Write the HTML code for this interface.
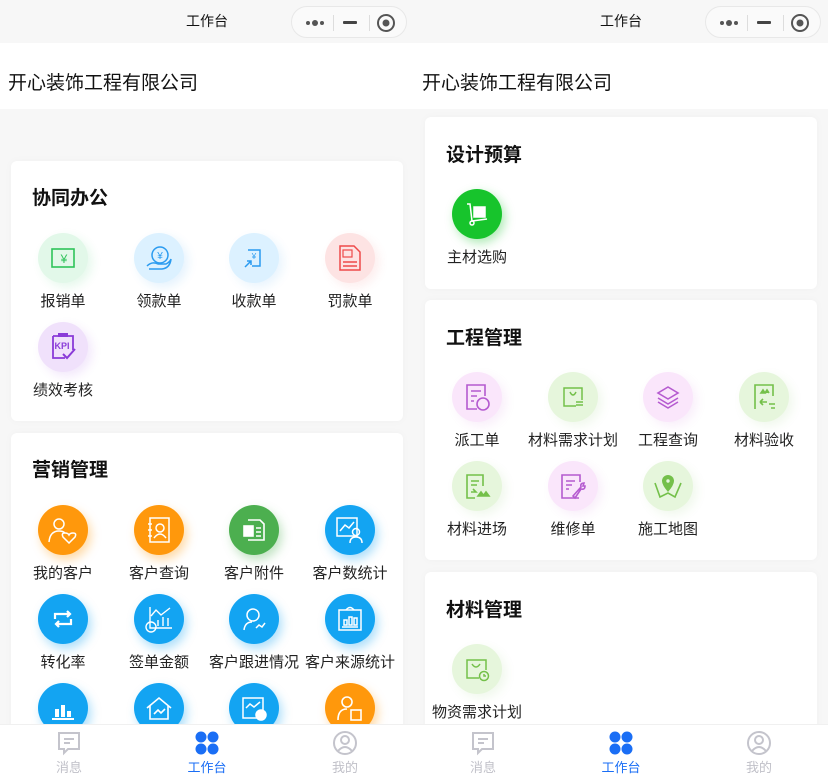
<!DOCTYPE html>
<html><head><meta charset="utf-8">
<style>
*{margin:0;padding:0;box-sizing:border-box}
body{width:828px;height:780px;overflow:hidden;background:#f7f7f7;font-family:"Liberation Sans","Noto Sans CJK SC",sans-serif;color:#222;position:relative}
.pane{position:absolute;top:0;width:414px;height:780px;overflow:hidden;background:#f7f7f7}
.hdr{position:absolute;left:0;top:0;width:414px;height:43px;background:#f7f7f7;text-align:center;line-height:43px;font-size:14px;color:#111}
.cap{position:absolute;left:291px;top:6px;width:116px;height:32px;border:1px solid #e8e8e8;border-radius:16px;background:#fafafa}
.cap .s{position:absolute;top:8px;width:1px;height:16px;background:#ddd}
.co{position:absolute;left:0;top:43px;width:414px;height:66px;background:#fff;font-size:19px;line-height:82px;padding-left:8px;color:#111}
.card{position:absolute;left:11px;width:392px;background:#fff;border-radius:6px;box-shadow:0 0 8px rgba(0,0,0,.03)}
.t{position:absolute;font-size:19px;font-weight:bold;color:#111}
.it{position:absolute;width:96px;height:80px;text-align:center}
.c{position:absolute;left:23px;top:0;width:50px;height:50px;border-radius:50%;display:flex;align-items:center;justify-content:center}
.l{position:absolute;left:-10px;width:116px;top:59px;line-height:20px;font-size:15px;color:#222;white-space:nowrap;text-align:center}
.tab{position:absolute;left:0;top:724px;width:414px;height:56px;background:#fff;border-top:1px solid #f0f0f0}
.ti{position:absolute;top:0;width:80px;text-align:center;font-size:13px;color:#c0c0c8}
.ti svg{display:block;margin:5px auto 0}
.ti span{display:block;margin-top:1px}
</style></head><body>

<!-- LEFT -->
<div class="pane" style="left:0">
 <div class="hdr">工作台</div>
 <div class="cap">
  <svg style="position:absolute;left:11px;top:8px" width="24" height="16"><circle cx="5" cy="8" r="2" fill="#555"/><circle cx="12" cy="8" r="3" fill="#555"/><circle cx="19" cy="8" r="2" fill="#555"/></svg>
  <div class="s" style="left:41px"></div>
  <div style="position:absolute;left:51px;top:14px;width:14px;height:3px;background:#444;border-radius:1px"></div>
  <div class="s" style="left:77px"></div>
  <svg style="position:absolute;left:84px;top:6px" width="20" height="20"><circle cx="10" cy="10" r="8" fill="none" stroke="#555" stroke-width="2"/><circle cx="10" cy="10" r="3.5" fill="#555"/></svg>
 </div>
 <div class="co">开心装饰工程有限公司</div>

 <div class="card" style="top:161px;height:260px">
  <div class="t" style="left:21px;top:22px">协同办公</div>
 </div>
 <div class="it" style="left:15px;top:233px"><div class="c" style="background:#e2f8e9;box-shadow:4px 4px 10px rgba(40,200,90,.12)"><svg width="26" height="22"><rect x="2" y="2" width="22" height="18" fill="none" stroke="#2fc35a" stroke-width="1.6"/><text x="14" y="16" font-size="12" fill="#2fc35a" text-anchor="middle" font-family="Liberation Sans">¥</text></svg></div><div class="l">报销单</div></div>
 <div class="it" style="left:111px;top:233px"><div class="c" style="background:#dcf1ff;box-shadow:4px 4px 10px rgba(30,150,240,.12)"><svg width="30" height="28"><circle cx="16" cy="11" r="8" fill="none" stroke="#2a9bf0" stroke-width="1.5"/><text x="16" y="15" font-size="10" fill="#2a9bf0" text-anchor="middle">¥</text><path d="M3 22 Q8 17 14 20 L22 20 Q26 18 27 15 Q26 24 18 25 L5 25" fill="none" stroke="#2a9bf0" stroke-width="1.5"/></svg></div><div class="l">领款单</div></div>
 <div class="it" style="left:206px;top:233px"><div class="c" style="background:#dcf1ff;box-shadow:4px 4px 10px rgba(30,150,240,.1)"><svg width="24" height="24"><path d="M6 4 H18 V20 H10" fill="none" stroke="#2a9bf0" stroke-width="1.5"/><text x="12" y="13" font-size="8" fill="#2a9bf0" text-anchor="middle">¥</text><path d="M3 21 L9 15 M5 15 H9 V19" fill="none" stroke="#2a9bf0" stroke-width="1.5"/></svg></div><div class="l">收款单</div></div>
 <div class="it" style="left:302px;top:233px"><div class="c" style="background:#fde3e3;box-shadow:4px 4px 10px rgba(240,80,80,.1)"><svg width="26" height="28"><path d="M3 2 H17 L23 8 V26 H3 Z" fill="none" stroke="#ef4a4a" stroke-width="1.5"/><rect x="6" y="6" width="9" height="7" fill="none" stroke="#ef4a4a" stroke-width="1.2"/><path d="M6 18 H20 M6 22 H20" stroke="#ef4a4a" stroke-width="1.5"/></svg></div><div class="l">罚款单</div></div>
 <div class="it" style="left:15px;top:322px"><div class="c" style="background:#f0e1fb;box-shadow:4px 4px 10px rgba(150,60,220,.12)"><svg width="28" height="30"><path d="M4 4 H24 V18 M4 4 V26 H16" fill="none" stroke="#8a3bd8" stroke-width="1.8"/><rect x="9" y="1" width="10" height="4" fill="#8a3bd8"/><text x="13" y="17" font-size="9" font-weight="bold" fill="#8a3bd8" text-anchor="middle">KPI</text><path d="M14 22 L18 26 L26 17" fill="none" stroke="#8a3bd8" stroke-width="2"/></svg></div><div class="l">绩效考核</div></div>

 <div class="card" style="top:433px;height:360px">
  <div class="t" style="left:21px;top:22px">营销管理</div>
 </div>
 <div class="it" style="left:15px;top:505px"><div class="c" style="background:#ff980c;box-shadow:3px 5px 10px rgba(255,150,0,.35)"><svg width="32" height="28" fill="none" stroke="#fff" stroke-width="1.5"><circle cx="12" cy="8" r="5"/><path d="M2 26 Q3 15 12 15 Q16 15 18 17"/><path d="M22 27 L16 21 Q14 17 18 17 Q21 17 22 19 Q23 17 26 17 Q30 17 28 21 Z"/></svg></div><div class="l">我的客户</div></div>
 <div class="it" style="left:111px;top:505px"><div class="c" style="background:#ff980c;box-shadow:3px 5px 10px rgba(255,150,0,.35)"><svg width="26" height="28" fill="none" stroke="#fff" stroke-width="1.5"><rect x="4" y="2" width="19" height="24"/><path d="M2 8 H6 M2 14 H6 M2 20 H6"/><circle cx="14" cy="12" r="4"/><path d="M8 22 Q14 14 20 22"/></svg></div><div class="l">客户查询</div></div>
 <div class="it" style="left:206px;top:505px"><div class="c" style="background:#4caf4f;box-shadow:3px 5px 10px rgba(76,175,79,.35)"><svg width="26" height="26" fill="none" stroke="#fff" stroke-width="1.6"><path d="M7 3 H19 L23 7 V23 H7"/><rect x="3" y="9" width="9" height="10" fill="#fff"/><path d="M15 11 H20 M15 15 H20 M15 19 H20"/></svg></div><div class="l">客户附件</div></div>
 <div class="it" style="left:302px;top:505px"><div class="c" style="background:#13a4f2;box-shadow:3px 5px 10px rgba(19,164,242,.35)"><svg width="30" height="28" fill="none" stroke="#fff" stroke-width="1.5"><rect x="2" y="2" width="20" height="18"/><path d="M5 15 L10 9 L14 12 L19 6"/><circle cx="21" cy="16" r="3.5"/><path d="M15 27 Q15 21 21 21 Q27 21 27 27"/></svg></div><div class="l">客户数统计</div></div>
 <div class="it" style="left:15px;top:594px"><div class="c" style="background:#13a4f2;box-shadow:3px 5px 10px rgba(19,164,242,.35)"><svg width="24" height="20" fill="none" stroke="#fff" stroke-width="2.2"><path d="M4 10 V5 H19 M16 2 L19 5 L16 8"/><path d="M20 10 V15 H5 M8 12 L5 15 L8 18"/></svg></div><div class="l">转化率</div></div>
 <div class="it" style="left:111px;top:594px"><div class="c" style="background:#13a4f2;box-shadow:3px 5px 10px rgba(19,164,242,.35)"><svg width="30" height="30" fill="none" stroke="#fff" stroke-width="1.4"><path d="M6 3 V24 H28"/><path d="M7 12 L12 6 L17 11 L26 4"/><path d="M14 22 V16 M19 22 V13 M24 22 V14"/><circle cx="7" cy="23" r="5"/></svg></div><div class="l">签单金额</div></div>
 <div class="it" style="left:206px;top:594px"><div class="c" style="background:#13a4f2;box-shadow:3px 5px 10px rgba(19,164,242,.35)"><svg width="26" height="26" fill="none" stroke="#fff" stroke-width="1.5"><circle cx="12" cy="9" r="6"/><path d="M3 24 Q4 16 11 16"/><path d="M15 22 L18 19 L21 21 L24 17"/></svg></div><div class="l">客户跟进情况</div></div>
 <div class="it" style="left:302px;top:594px"><div class="c" style="background:#13a4f2;box-shadow:3px 5px 10px rgba(19,164,242,.35)"><svg width="28" height="28" fill="none" stroke="#fff" stroke-width="1.5"><rect x="3" y="5" width="22" height="20"/><path d="M10 5 Q14 0 18 5"/><rect x="8" y="15" width="3" height="5"/><rect x="13" y="12" width="3" height="8"/><rect x="18" y="13" width="3" height="7"/><path d="M6 22 H22"/></svg></div><div class="l">客户来源统计</div></div>
 <div class="it" style="left:15px;top:683px"><div class="c" style="background:#13a4f2;box-shadow:3px 5px 10px rgba(19,164,242,.35)"><svg width="26" height="26" fill="#fff"><rect x="5" y="14" width="4" height="8"/><rect x="11" y="10" width="4" height="12"/><rect x="17" y="16" width="4" height="6"/><rect x="2" y="23" width="22" height="2"/></svg></div></div>
 <div class="it" style="left:111px;top:683px"><div class="c" style="background:#13a4f2;box-shadow:3px 5px 10px rgba(19,164,242,.35)"><svg width="28" height="26" fill="none" stroke="#fff" stroke-width="1.6"><path d="M2 13 L14 3 L26 13 M5 11 V24 H23 V11"/><path d="M9 19 L13 15 L16 18 L20 14"/></svg></div></div>
 <div class="it" style="left:206px;top:683px"><div class="c" style="background:#13a4f2;box-shadow:3px 5px 10px rgba(19,164,242,.35)"><svg width="28" height="28" fill="none" stroke="#fff" stroke-width="1.5"><rect x="3" y="4" width="20" height="20"/><path d="M6 14 L10 10 L14 13 L20 8"/><circle cx="21" cy="21" r="5" fill="#fff"/></svg></div></div>
 <div class="it" style="left:302px;top:683px"><div class="c" style="background:#ff980c;box-shadow:3px 5px 10px rgba(255,150,0,.35)"><svg width="28" height="28" fill="none" stroke="#fff" stroke-width="1.6"><circle cx="11" cy="8" r="5"/><path d="M2 26 Q2 15 11 15"/><rect x="15" y="16" width="10" height="10"/></svg></div></div>

 <div class="tab">
  <div class="ti" style="left:29px"><svg width="26" height="26" fill="none" stroke="#c4c4cc" stroke-width="2"><path d="M3 3 H23 V19 H12 L8 23 V19 H3 Z"/><path d="M8 9 H18 M8 13 H14"/></svg><span>消息</span></div>
  <div class="ti" style="left:167px;color:#1a6ef5"><svg width="26" height="26" fill="#1a6ef5"><circle cx="7" cy="7" r="5.5"/><circle cx="19" cy="7" r="5.5"/><circle cx="7" cy="19" r="5.5"/><circle cx="19" cy="19" r="5.5"/></svg><span>工作台</span></div>
  <div class="ti" style="left:305px"><svg width="26" height="26" fill="none" stroke="#c4c4cc" stroke-width="2"><circle cx="13" cy="13" r="11"/><circle cx="13" cy="10" r="4"/><path d="M6 21 Q13 13 20 21"/></svg><span>我的</span></div>
 </div>
</div>

<!-- RIGHT -->
<div class="pane" style="left:414px">
 <div class="hdr">工作台</div>
 <div class="cap">
  <svg style="position:absolute;left:11px;top:8px" width="24" height="16"><circle cx="5" cy="8" r="2" fill="#555"/><circle cx="12" cy="8" r="3" fill="#555"/><circle cx="19" cy="8" r="2" fill="#555"/></svg>
  <div class="s" style="left:41px"></div>
  <div style="position:absolute;left:51px;top:14px;width:14px;height:3px;background:#444;border-radius:1px"></div>
  <div class="s" style="left:77px"></div>
  <svg style="position:absolute;left:84px;top:6px" width="20" height="20"><circle cx="10" cy="10" r="8" fill="none" stroke="#555" stroke-width="2"/><circle cx="10" cy="10" r="3.5" fill="#555"/></svg>
 </div>
 <div class="co">开心装饰工程有限公司</div>

 <div class="card" style="top:117px;height:172px"><div class="t" style="left:21px;top:23px">设计预算</div></div>
 <div class="it" style="left:15px;top:189px"><div class="c" style="background:#17c42c;box-shadow:3px 4px 10px rgba(23,196,44,.35)"><svg width="26" height="26" fill="none" stroke="#fff" stroke-width="1.5"><path d="M3 3 L6 3 L8 20 L23 18"/><circle cx="8" cy="22" r="2"/><rect x="10" y="6" width="11" height="10" fill="#fff"/></svg></div><div class="l">主材选购</div></div>

 <div class="card" style="top:300px;height:260px"><div class="t" style="left:21px;top:23px">工程管理</div></div>
 <div class="it" style="left:15px;top:372px"><div class="c" style="background:#fae6fb;box-shadow:4px 4px 10px rgba(200,90,210,.1)"><svg width="28" height="30" fill="none" stroke="#b55ad0" stroke-width="1.6"><path d="M22 14 V3 H4 V27 H14"/><path d="M8 9 H18 M8 14 H14 M8 19 H11"/><circle cx="20" cy="22" r="6"/></svg></div><div class="l">派工单</div></div>
 <div class="it" style="left:111px;top:372px"><div class="c" style="background:#e6f6dc;box-shadow:4px 4px 10px rgba(110,190,70,.1)"><svg width="24" height="24" fill="none" stroke="#74c04a" stroke-width="1.5"><path d="M15 21 H3 V3 H21 V15"/><path d="M9 7 Q12 13 15 7"/><path d="M15 17 H22 M15 20 H22"/></svg></div><div class="l">材料需求计划</div></div>
 <div class="it" style="left:206px;top:372px"><div class="c" style="background:#fae6fb;box-shadow:4px 4px 10px rgba(200,90,210,.1)"><svg width="24" height="24" fill="none" stroke="#b55ad0" stroke-width="1.6"><path d="M12 2 L22 8 L12 14 L2 8 Z"/><path d="M2 13 L12 19 L22 13"/><path d="M2 17 L12 23 L22 17"/></svg></div><div class="l">工程查询</div></div>
 <div class="it" style="left:302px;top:372px"><div class="c" style="background:#e6f6dc;box-shadow:4px 4px 10px rgba(110,190,70,.1)"><svg width="26" height="30" fill="none" stroke="#74c04a" stroke-width="1.6"><path d="M4 27 V3 H22 V14"/><path d="M9 20 H16 M9 20 L12 17 M9 20 L12 23"/><path d="M10 11 L12 8 L14 11 Z M14 11 L16 8 L18 11" fill="#74c04a"/><path d="M18 22 H24 M20 26 H24"/></svg></div><div class="l">材料验收</div></div>
 <div class="it" style="left:15px;top:461px"><div class="c" style="background:#e6f6dc;box-shadow:4px 4px 10px rgba(110,190,70,.1)"><svg width="28" height="28" fill="none" stroke="#74c04a" stroke-width="1.6"><path d="M20 14 V3 H4 V26 H12"/><path d="M8 9 H16 M8 13 H14 M8 20 H13 L10 17"/><path d="M15 24 L18 20 L21 24 Z M20 24 L23 20 L26 24 Z" fill="#74c04a"/></svg></div><div class="l">材料进场</div></div>
 <div class="it" style="left:111px;top:461px"><div class="c" style="background:#fae6fb;box-shadow:4px 4px 10px rgba(200,90,210,.1)"><svg width="28" height="28" fill="none" stroke="#b55ad0" stroke-width="1.6"><path d="M21 10 V3 H3 V26 H20"/><path d="M7 9 H16 M7 13 H13 M7 17 H10"/><path d="M14 24 L22 15 Q21 11 25 11 L24 14 L26 14 Q26 18 22 17 L16 26 Z"/></svg></div><div class="l">维修单</div></div>
 <div class="it" style="left:206px;top:461px"><div class="c" style="background:#e6f6dc;box-shadow:4px 4px 10px rgba(110,190,70,.1)"><svg width="30" height="26" fill="none" stroke="#74c04a" stroke-width="1.6"><path d="M2 10 L7 24 L15 20 L22 24 L28 10"/><path d="M15 19 Q9 12 9 8 A6 6 0 0 1 21 8 Q21 12 15 19 Z" fill="#74c04a" stroke="none"/><circle cx="15" cy="8" r="2.5" fill="#e6f6dc"/></svg></div><div class="l">施工地图</div></div>

 <div class="card" style="top:572px;height:200px"><div class="t" style="left:21px;top:23px">材料管理</div></div>
 <div class="it" style="left:15px;top:644px"><div class="c" style="background:#e6f6dc;box-shadow:4px 4px 10px rgba(110,190,70,.1)"><svg width="26" height="26" fill="none" stroke="#74c04a" stroke-width="1.5"><path d="M15 22 H3 V4 H22 V14"/><path d="M8 8 Q12 14 16 8"/><circle cx="20" cy="20" r="4.5"/><path d="M20 18 V20 H22"/></svg></div><div class="l">物资需求计划</div></div>

 <div class="tab">
  <div class="ti" style="left:29px"><svg width="26" height="26" fill="none" stroke="#c4c4cc" stroke-width="2"><path d="M3 3 H23 V19 H12 L8 23 V19 H3 Z"/><path d="M8 9 H18 M8 13 H14"/></svg><span>消息</span></div>
  <div class="ti" style="left:167px;color:#1a6ef5"><svg width="26" height="26" fill="#1a6ef5"><circle cx="7" cy="7" r="5.5"/><circle cx="19" cy="7" r="5.5"/><circle cx="7" cy="19" r="5.5"/><circle cx="19" cy="19" r="5.5"/></svg><span>工作台</span></div>
  <div class="ti" style="left:305px"><svg width="26" height="26" fill="none" stroke="#c4c4cc" stroke-width="2"><circle cx="13" cy="13" r="11"/><circle cx="13" cy="10" r="4"/><path d="M6 21 Q13 13 20 21"/></svg><span>我的</span></div>
 </div>
</div>
</body></html>
